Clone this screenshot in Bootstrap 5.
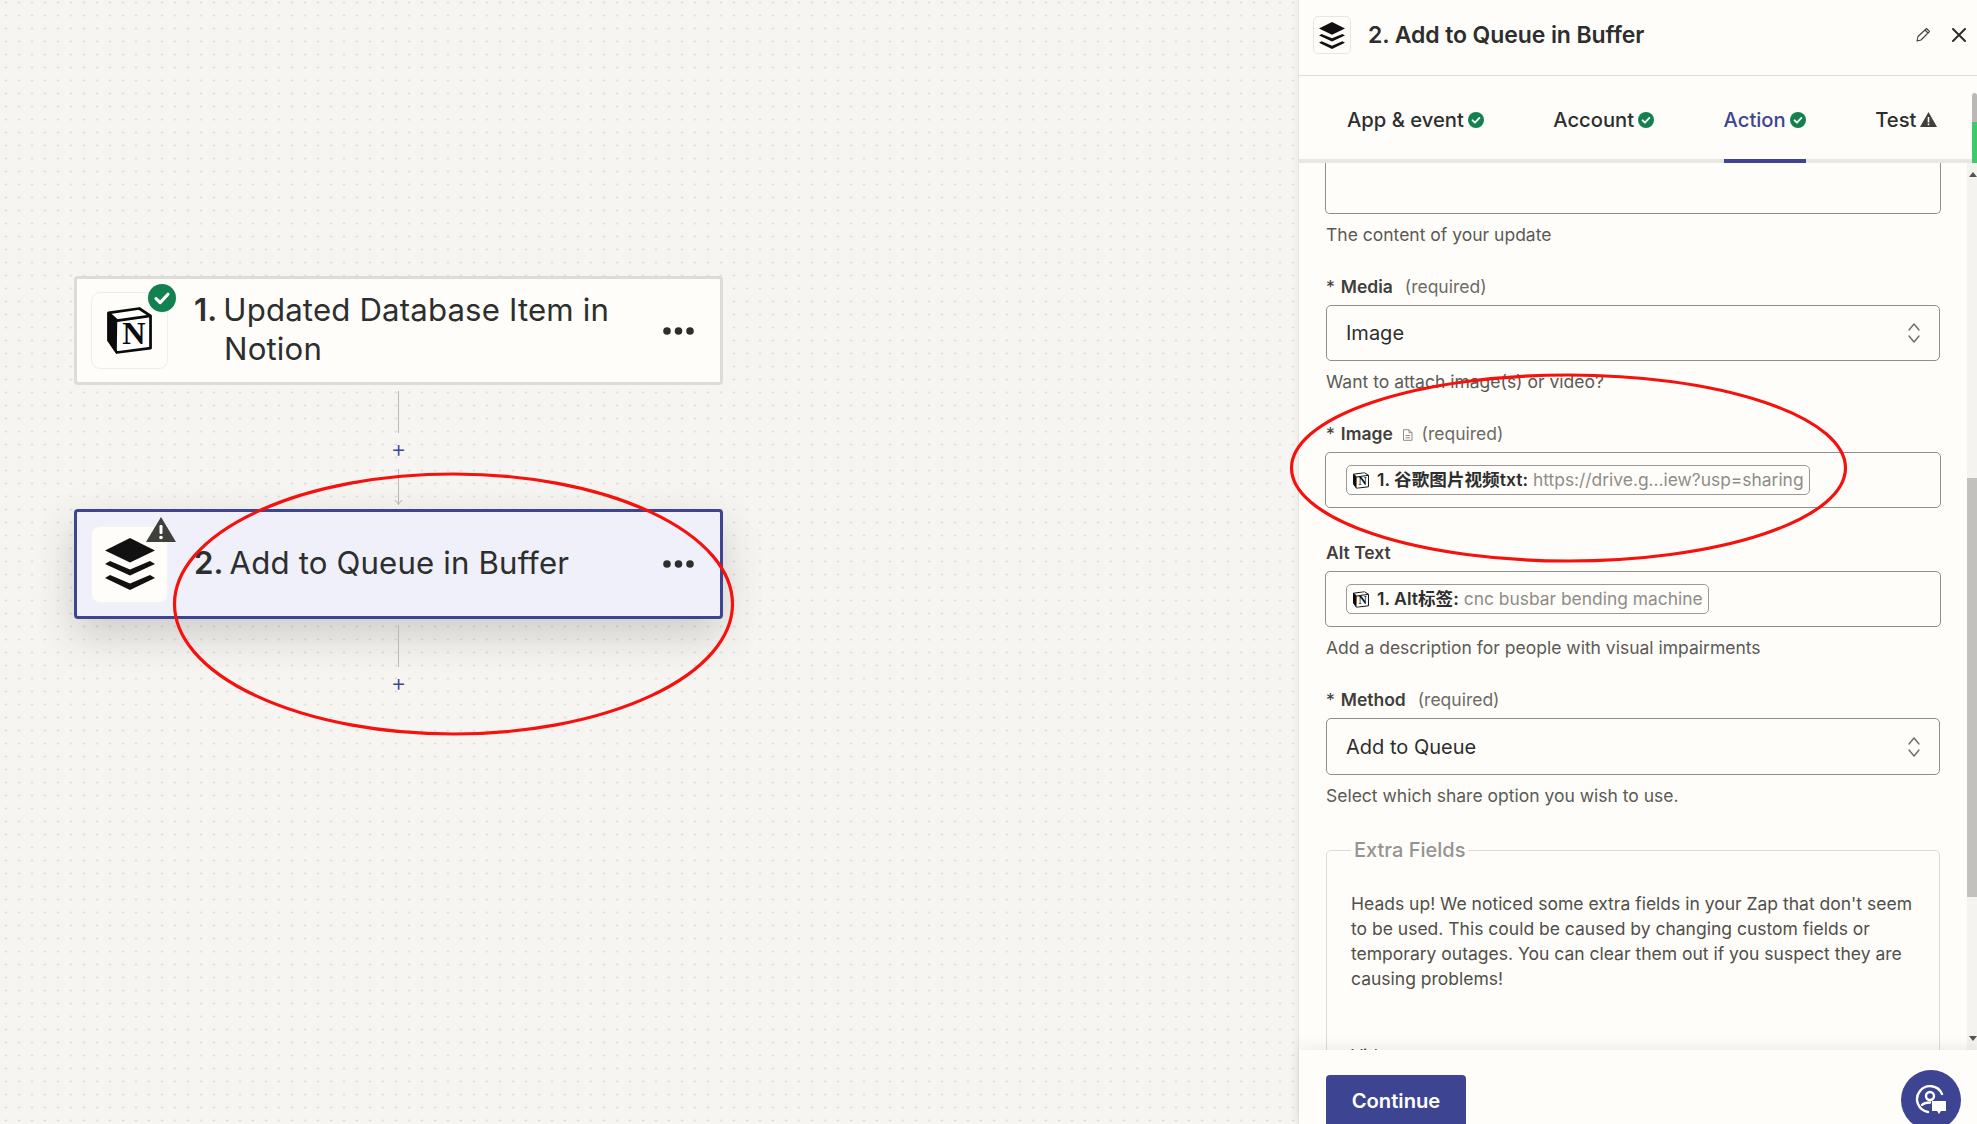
<!DOCTYPE html>
<html lang="en">
<head>
<meta charset="utf-8">
<title>Add to Queue in Buffer</title>
<link href="https://cdn.jsdelivr.net/npm/bootstrap@5.3.0/dist/css/bootstrap.min.css" rel="stylesheet">
<style>
html,body{height:100%}
body{font-family:Inter,"Noto Sans CJK SC",sans-serif;color:#2d2e2e;background:#f6f5f2;overflow:hidden;font-size:17.5px;line-height:24px}
.zcanvas{width:1299px;flex:none;height:1124px;padding:276px 0 0 74px;
 background-color:#f6f5f2;background-image:radial-gradient(circle,#dcdbd7 .9px,transparent 1.2px);background-size:13px 13px;background-position:-.5px -4px}
.zstep{width:649px;height:110px;border:3px solid #dddcd8;border-radius:4px;background:#fffdf9;padding:13px 14px;position:relative}
.zstep-first{height:109px}
.zstep-on{border-color:#3d4592;background:#f0f0fb;box-shadow:0 16px 40px rgba(40,40,40,.2)}
.zapp{width:77px;height:77px;flex:none;border-radius:9px;background:#fffdf9;border:1px solid #eeede9;position:relative}
.zstep-on .zapp{border-color:#f3f2f4}
.zbadge{position:absolute;top:-9px;right:-9px;width:28px;height:28px}
.zbadge-warn{top:-10px;right:-9px;width:30px;height:25px}
.zstep-title{font-size:31.2px;line-height:39px;font-weight:400;margin-left:26px;width:440px;padding:0 0 1px 30px;text-indent:-30px;letter-spacing:.15px}
.zstep-title b{font-weight:600;margin-right:-3px}
.zdots{margin-left:auto;margin-right:12px;width:31px;height:8px;flex:none}
.zconn{width:649px;height:124px;color:#3d4592;padding-top:6px}
.zline{width:1px;background:#b9b8b4;position:relative}
.zline-a{height:42px}
.zline-b{height:36px}
.zarrow{margin-top:-6px}
.zplus{font-size:24px;line-height:36px;height:36px;font-weight:300;margin-top:-2px;margin-bottom:2px}
.zpanel{width:678px;flex:none;height:1124px;background:#fffdf9;box-shadow:-1px 0 0 #e6e5e1,-3px 0 4px rgba(0,0,0,.04);position:relative}
.zhead{height:76px;border-bottom:1px solid #dcdbd7;padding:0 11px 5px 14px}
.zhead-icon{width:38px;height:38px;border:1px solid #e7e6e2;border-radius:5px;flex:none;margin-right:17px}
.zhead h1{font-size:23px;font-weight:600;margin:0;line-height:30px;letter-spacing:-.1px}
.zpen{margin-right:21px}
.ztabs{height:87px;border-bottom:4px solid #e8e7e3;padding-left:48px;gap:69.5px;flex-wrap:nowrap}
.ztab{display:flex;align-items:center;gap:4px;height:87px;font-size:20.2px;font-weight:500;color:#2d2e2e;border-bottom:4px solid transparent;padding-top:4px;white-space:nowrap}
.ztab-on{color:#3d4592;border-bottom-color:#3d4592}
.ztabglow{position:absolute;right:0;top:93px;width:5px;height:72px;border-radius:3px;background:linear-gradient(#b9b8b4 0,#b9b8b4 40%,#3ecb6e 40%,#3ecb6e 100%)}
.zbody{overflow:hidden;min-height:0}
.zform{width:668px;flex:none;padding:0 27px 0 27px}
.zstub{height:51px;border:1px solid #8f8e8a;border-top:0;border-radius:0 0 5px 5px;margin:0 -1px}
.zhint{color:#5a5a56;margin-top:9px;font-size:17.5px;line-height:24px}
.zlabel{margin-top:28px;margin-bottom:6px;font-size:17.5px;line-height:24px;color:#6b6b67}
.zlabel-tight{margin-top:33px}
.zlabel b{font-weight:600;color:#3f3f3c}
.zlabel .zstar{color:#3f3f3c;margin-right:6px}
.zlabel .zreq{margin-left:7px}
.zdoc{vertical-align:-1px}
.zsel{height:56px;border:1px solid #8f8e8a;border-radius:5px;padding:0 18px 0 19px;font-size:20px;color:#2d2e2e;background:#fffdf9}
.zsel-tall{height:57px}
.zfield{height:56px;border:1px solid #8f8e8a;border-radius:5px;padding:0 20px;margin-left:-1px;margin-right:-1px;background:#fffdf9}
.zpill{height:30px;border:1px solid #9a9996;border-radius:5px;padding:0 5px 0 6px;font-size:17.6px;white-space:nowrap;gap:5px;background:#fffdf9}
.zpill-icon{margin-right:3px}
.zpill b{font-weight:600;color:#2d2e2e}
.zpill span{color:#8e8d89;font-size:17.4px}
.zset{border:1px solid #dcdbd7;border-radius:5px;padding:0 24px;margin:29px 0 0}
.zset legend{float:none;width:auto;font-size:20px;line-height:26px;color:#959490;margin:0;padding:0 3px;font-weight:500}
.zset p{margin:28px 0 0;line-height:25px;color:#4f4f4b}
.zset .zvis{margin-top:53px;color:#4f4f4b}
.zbar{width:10px;flex:none;background:#f4f3f0;position:relative}
.zthumb{position:absolute;left:0;right:0;top:315px;height:419px;background:#c2c1be}
.zbar i{position:absolute;left:2px;width:0;height:0;border-left:4px solid transparent;border-right:4px solid transparent}
.zup{top:9px;border-bottom:5px solid #55544f}
.zdown{bottom:9px;border-top:5px solid #55544f}
.zfoot{height:74px;padding:25px 27px 0;overflow:hidden;box-shadow:0 -4px 12px rgba(60,60,60,.08);position:relative;background:#fffdf9}
.zgo{width:140px;height:72px;background:#3d4592;border:0;border-radius:4px;color:#fff;font-size:20.2px;font-weight:600;padding:0 0 20px}
.zhelp{position:absolute;left:602px;top:20px;width:60px;height:60px;border-radius:50%;background:#3d4592}
.zmarks{position:absolute;left:0;top:0;width:1977px;height:1124px;pointer-events:none}
.zhidden{width:0;height:0}
</style>
</head>
<body class="d-flex">
<svg class="zhidden position-absolute" aria-hidden="true">
  <symbol id="buf" viewBox="0 0 50 52">
    <path d="M25 0 L50 12.500 L25 24.500 L0 12.500 Z" fill="#111"/>
    <path d="M5 23 L25 31.500 L45 23 L50 26 L25 37.500 L0 26 Z" fill="#111"/>
    <path d="M5 37 L25 45.500 L45 37 L50 40 L25 52 L0 40 Z" fill="#111"/>
  </symbol>
  <symbol id="ok" viewBox="0 0 15 15"><circle cx="7.500" cy="7.500" r="7.500" fill="#13804f"/><path d="M4.300 7.800l2.200 2.200 4.200-4.500" fill="none" stroke="#fff" stroke-width="1.700" stroke-linecap="round" stroke-linejoin="round"/></symbol>
  <symbol id="tri3" viewBox="0 0 31 8"><circle cx="4" cy="4" r="3.800" fill="#2d2e2e"/><circle cx="15.500" cy="4" r="3.800" fill="#2d2e2e"/><circle cx="27" cy="4" r="3.800" fill="#2d2e2e"/></symbol>
  <symbol id="updown" viewBox="0 0 14 22"><path d="M2 8l5-6 5 6M2 14l5 6 5-6" fill="none" stroke="#6b6b67" stroke-width="1.400" stroke-linecap="round" stroke-linejoin="round"/></symbol>
  <symbol id="cubeshape" viewBox="0 0 46 48">
    <path d="M1.500 6 L33 1.500 L44.500 9 L44.500 42 L10 46.500 L1.500 34 Z" fill="#fff" stroke="#0b0b0b" stroke-width="2.800" stroke-linejoin="round"/>
    <path d="M1.500 6 L10.500 14 L10 46.500 L1.500 34 Z" fill="#0b0b0b"/>
    <path d="M1.500 6 L10.500 14 L44.500 9" fill="none" stroke="#0b0b0b" stroke-width="2.800" stroke-linejoin="round"/>
  </symbol>
</svg>

<main class="zcanvas d-flex flex-column align-items-start">
  <section class="zstep zstep-first d-flex align-items-center">
    <div class="zapp d-flex align-items-center justify-content-center">
      <svg width="45" height="47" viewBox="0 0 46 48"><use href="#cubeshape" width="46" height="48"/><text x="27.500" y="38" text-anchor="middle" font-family="'Liberation Serif',serif" font-weight="700" font-size="33" fill="#0b0b0b">N</text></svg>
      <svg class="zbadge"><use href="#ok"/></svg>
    </div>
    <h2 class="zstep-title mb-0"><b>1.</b> Updated Database Item in Notion</h2>
    <svg class="zdots"><use href="#tri3"/></svg>
  </section>

  <div class="zconn d-flex flex-column align-items-center">
    <div class="zline zline-a"></div>
    <div class="zplus">+</div>
    <div class="zline zline-b"></div>
    <svg width="9" height="6" viewBox="0 0 9 6" class="d-block zarrow"><path d="M1 1l3.500 4L8 1" fill="none" stroke="#b9b8b4"/></svg>
  </div>

  <section class="zstep zstep-on d-flex align-items-center">
    <div class="zapp d-flex align-items-center justify-content-center">
      <svg width="50" height="52"><use href="#buf"/></svg>
      <svg class="zbadge zbadge-warn" viewBox="0 0 30 25"><path d="M15 0 L30 25 L0 25 Z" fill="#3f3f3c"/><rect x="13.500" y="8" width="3" height="9" rx="1.200" fill="#fff"/><circle cx="15" cy="20.500" r="1.800" fill="#fff"/></svg>
    </div>
    <h2 class="zstep-title mb-0 text-nowrap"><b>2.</b> Add to Queue in Buffer</h2>
    <svg class="zdots"><use href="#tri3"/></svg>
  </section>

  <div class="zconn d-flex flex-column align-items-center">
    <div class="zline zline-a"></div>
    <div class="zplus">+</div>
  </div>
</main>

<aside class="zpanel d-flex flex-column">
  <header class="zhead d-flex align-items-center flex-shrink-0">
    <div class="zhead-icon d-flex align-items-center justify-content-center">
      <svg width="26" height="27"><use href="#buf"/></svg>
    </div>
    <h1>2. Add to Queue in Buffer</h1>
    <svg class="ms-auto zpen" width="16" height="16" viewBox="0 0 16 16"><path d="M2 14l1-4.500L11.500 1.500l3 3L6 13z M10 3l3 3" fill="none" stroke="#3f3f3c" stroke-width="1.100" stroke-linejoin="round"/></svg>
    <svg width="14" height="14" viewBox="0 0 14 14"><path d="M1 1l12 12M13 1L1 13" stroke="#2d2e2e" stroke-width="2" stroke-linecap="round"/></svg>
  </header>

  <ul class="nav ztabs flex-shrink-0">
    <li class="ztab">App &amp; event <svg width="16" height="16"><use href="#ok"/></svg></li>
    <li class="ztab">Account <svg width="16" height="16"><use href="#ok"/></svg></li>
    <li class="ztab ztab-on">Action <svg width="16" height="16"><use href="#ok"/></svg></li>
    <li class="ztab">Test <svg width="17" height="15" viewBox="0 0 17 15"><path d="M8.500 0L17 15H0z" fill="#3f3f3c"/><rect x="7.700" y="5" width="1.600" height="5.500" fill="#fff"/><rect x="7.700" y="11.500" width="1.600" height="1.700" fill="#fff"/></svg></li>
  </ul>
  <div class="ztabglow"></div>

  <div class="zbody d-flex flex-grow-1">
    <form class="zform">
      <div class="zstub"></div>
      <div class="zhint">The content of your update</div>

      <div class="zlabel"><span class="zstar">*</span><b>Media</b> <span class="zreq">(required)</span></div>
      <div class="zsel d-flex align-items-center justify-content-between">Image
        <svg width="14" height="22"><use href="#updown"/></svg>
      </div>
      <div class="zhint">Want to attach image(s) or video?</div>

      <div class="zlabel"><span class="zstar">*</span><b>Image</b>
        <svg class="mx-1 zdoc" width="11" height="12" viewBox="0 0 11 12"><path d="M1.500 .7h5.500l3 3v7.600h-8.500zM7 .7v3h3M3.500 6.500h4.500M3.500 8.800h4.500" fill="none" stroke="#8e8d89"/></svg>
        <span>(required)</span></div>
      <div class="zfield d-flex align-items-center">
        <div class="zpill d-inline-flex align-items-center">
          <svg class="zpill-icon" width="16" height="17" viewBox="0 0 46 48"><use href="#cubeshape" width="46" height="48"/><text x="27.500" y="38" text-anchor="middle" font-family="'Liberation Serif',serif" font-weight="700" font-size="33" fill="#0b0b0b">N</text></svg>
          <b>1. 谷歌图片视频txt:</b> <span>https://drive.g...iew?usp=sharing</span>
        </div>
      </div>

      <div class="zlabel zlabel-tight"><b>Alt Text</b></div>
      <div class="zfield d-flex align-items-center">
        <div class="zpill d-inline-flex align-items-center">
          <svg class="zpill-icon" width="16" height="17" viewBox="0 0 46 48"><use href="#cubeshape" width="46" height="48"/><text x="27.500" y="38" text-anchor="middle" font-family="'Liberation Serif',serif" font-weight="700" font-size="33" fill="#0b0b0b">N</text></svg>
          <b>1. Alt标签:</b> <span>cnc busbar bending machine</span>
        </div>
      </div>
      <div class="zhint">Add a description for people with visual impairments</div>

      <div class="zlabel"><span class="zstar">*</span><b>Method</b> <span class="zreq">(required)</span></div>
      <div class="zsel zsel-tall d-flex align-items-center justify-content-between">Add to Queue
        <svg width="14" height="22"><use href="#updown"/></svg>
      </div>
      <div class="zhint">Select which share option you wish to use.</div>

      <fieldset class="zset">
        <legend>Extra Fields</legend>
        <p>Heads up! We noticed some extra fields in your Zap that don't seem to be used. This could be caused by changing custom fields or temporary outages. You can clear them out if you suspect they are causing problems!</p>
        <div class="zvis">Video</div>
      </fieldset>
    </form>
    <div class="zbar"><i class="zup"></i><div class="zthumb"></div><i class="zdown"></i></div>
  </div>

  <footer class="zfoot flex-shrink-0">
    <button type="button" class="btn zgo">Continue</button>
    <div class="zhelp d-flex align-items-center justify-content-center">
      <svg width="32" height="32" viewBox="0 0 32 32" fill="none"><path d="M27 10A13 13 0 1 0 13 28" stroke="#fff" stroke-width="2.400" stroke-linecap="round"/><circle cx="15" cy="12" r="4" stroke="#fff" stroke-width="2.400"/><path d="M7 21c2-2 5-2.500 8-2.500" stroke="#fff" stroke-width="2.400" stroke-linecap="round"/><path d="M17 17h14v10h-5l-2 3-2-3h-5z" fill="#fff"/></svg>
    </div>
  </footer>
</aside>

<svg class="zmarks" viewBox="0 0 1977 1124" aria-hidden="true">
  <ellipse cx="453.500" cy="604" rx="279" ry="130" fill="none" stroke="#f5120e" stroke-width="3.200"/>
  <ellipse cx="1568.500" cy="468" rx="277" ry="93" fill="none" stroke="#f5120e" stroke-width="3.200"/>
</svg>
</body>
</html>
